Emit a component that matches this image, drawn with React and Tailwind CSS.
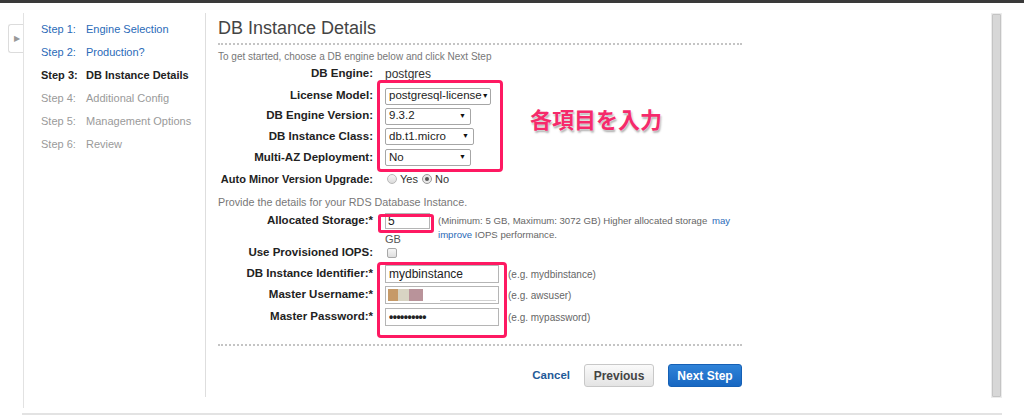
import React from 'react';

const steps = [
  { n: 'Step 1:', label: 'Engine Selection', state: 'done' },
  { n: 'Step 2:', label: 'Production?', state: 'done' },
  { n: 'Step 3:', label: 'DB Instance Details', state: 'current' },
  { n: 'Step 4:', label: 'Additional Config', state: 'todo' },
  { n: 'Step 5:', label: 'Management Options', state: 'todo' },
  { n: 'Step 6:', label: 'Review', state: 'todo' },
];

const sans = "font-['Liberation_Sans',Arial,sans-serif]";

function Label({ children, h = 'h-[20px]', size = 'text-[11.5px]' }) {
  return (
    <div className={`w-[155px] shrink-0 whitespace-nowrap text-right ${size} font-bold text-[#222] ${h} flex items-center justify-end`}>
      {children}
    </div>
  );
}

function Select({ value, width }) {
  return (
    <div className={`${width} h-[17px] border border-[#a6a6a6] rounded-[2px] bg-white flex items-center justify-between pl-[3px] pr-[4px] text-[11.5px] text-[#222] whitespace-nowrap`}>
      <span>{value}</span>
      <span className="text-[7px] text-[#111]">▼</span>
    </div>
  );
}

function Row({ label, children, className = '', h = 'h-[20px]', size }) {
  return (
    <div className={`flex items-center ${h} ${className}`}>
      <Label h={h} size={size}>{label}</Label>
      <div className="ml-[12px] flex items-center">{children}</div>
    </div>
  );
}

function TextBox({ children }) {
  return (
    <div className="w-[114px] h-[18px] border border-[#b5b5b5] bg-white flex items-center px-[3px] text-[12px] text-[#222]">
      {children}
    </div>
  );
}

export default function App() {
  return (
    <div className={`relative w-[1024px] h-[417px] bg-white overflow-hidden ${sans}`}>
      <div className="h-[3px] bg-[#3a3a3a]" />

      <div className="flex pt-[10px]">
        {/* collapse tab */}
        <div className="w-[23px] shrink-0">
          <div className="ml-[8px] mt-[11px] w-[16px] h-[29px] border border-r-0 border-[#dcdcdc] rounded-l-[3px] bg-white flex items-center justify-center">
            <span className="text-[8px] text-[#999]">▶</span>
          </div>
        </div>

        {/* wizard steps */}
        <div className="w-[182px] shrink-0 h-[395px] border-l border-[#e2e2e2] pl-[17px] pt-[5px]">
          {steps.map((s) => (
            <div
              key={s.n}
              className={`flex h-[23px] items-center text-[11px] whitespace-nowrap ${
                s.state === 'done'
                  ? 'text-[#2a6ab8]'
                  : s.state === 'current'
                  ? 'text-[#222] font-bold'
                  : 'text-[#9a9a9a]'
              }`}
            >
              <span className="w-[45px]">{s.n}</span>
              <span>{s.label}</span>
            </div>
          ))}
        </div>

        {/* main panel */}
        <div className="w-[786px] shrink-0 h-[384px] border-l border-[#dedede] pl-[12px]">
          <div className="w-[524px]">
            <h1 className="h-[30px] leading-[30px] text-[18px] text-[#444]">DB Instance Details</h1>
            <div className="h-[2px] border-b-2 border-dotted border-[#c4c4c4]" />

            <p className="mt-[5px] leading-[13px] text-[10px] text-[#777]">
              To get started, choose a DB engine below and click Next Step
            </p>

            <Row label="DB Engine:" className="mt-[1px]">
              <span className="text-[12px] text-[#333]">postgres</span>
            </Row>
            <Row label="License Model:" className="mt-[2px]">
              <Select value="postgresql-license" width="w-[106px]" />
            </Row>
            <Row label="DB Engine Version:">
              <Select value="9.3.2" width="w-[86px]" />
            </Row>
            <Row label="DB Instance Class:" h="h-[21px]">
              <Select value="db.t1.micro" width="w-[89px]" />
            </Row>
            <Row label="Multi-AZ Deployment:" h="h-[21px]">
              <Select value="No" width="w-[86px]" />
            </Row>
            <Row label="Auto Minor Version Upgrade:" h="h-[22px]" size="text-[11px]">
              <div className="flex items-center text-[11px] text-[#333] ml-[2px]">
                <span className="w-[10px] h-[10px] rounded-full border border-[#b8b8b8] bg-gradient-to-b from-[#f4f4f4] to-[#dcdcdc]" />
                <span className="ml-[3px]">Yes</span>
                <span className="ml-[4px] w-[10px] h-[10px] rounded-full border border-[#9a9a9a] bg-[#e8e8e8] flex items-center justify-center">
                  <span className="w-[4px] h-[4px] rounded-full bg-[#555]" />
                </span>
                <span className="ml-[3px]">No</span>
              </div>
            </Row>

            <p className="mt-[5px] leading-[14px] text-[10.75px] text-[#777]">
              Provide the details for your RDS Database Instance.
            </p>

            {/* allocated storage */}
            <div className="mt-[4px] flex h-[33px]">
              <Label h="h-[16px]">Allocated Storage:*</Label>
              <div className="ml-[12px] w-[53px] shrink-0">
                <div className="w-[45px] h-[16px] border border-[#b5b5b5] bg-white px-[2px] text-[12px] leading-[14px] text-[#222]">5</div>
                <div className="mt-[4px] leading-[13px] text-[11px] text-[#555]">GB</div>
              </div>
              <p className="mt-[1px] w-[320px] shrink-0 whitespace-nowrap leading-[14px] text-[9.6px] text-[#666]">
                (Minimum: 5 GB, Maximum: 3072 GB) Higher allocated storage{' '}
                <span className="text-[#2a6ab8] ml-[2px]">may</span>
                <br />
                <span className="text-[#2a6ab8]">improve</span> IOPS performance.
              </p>
            </div>

            <Row label="Use Provisioned IOPS:" h="h-[14px]">
              <span className="ml-[2px] w-[10px] h-[10px] rounded-[2px] border border-[#a8a8a8] bg-gradient-to-b from-[#f6f6f6] to-[#dedede]" />
            </Row>

            <Row label="DB Instance Identifier:*" h="h-[18px]" className="mt-[5px]">
              <TextBox>mydbinstance</TextBox>
              <span className="ml-[9px] text-[10px] text-[#666]">(e.g. mydbinstance)</span>
            </Row>
            <Row label="Master Username:*" h="h-[18px]" className="mt-[3px]">
              <div className="w-[114px] h-[18px] border border-[#b5b5b5] bg-white flex items-center pl-[2px]">
                <span className="w-[10px] h-[12px] bg-[#c69a68]" />
                <span className="w-[11px] h-[12px] bg-[#d8d4c3]" />
                <span className="w-[14px] h-[12px] bg-[#b9939a]" />
                <span className="ml-[17px] mt-[10px] w-[56px] h-px bg-[#d0d0d0]" />
              </div>
              <span className="ml-[9px] text-[10px] text-[#666]">(e.g. awsuser)</span>
            </Row>
            <Row label="Master Password:*" h="h-[18px]" className="mt-[4px]">
              <TextBox>
                <span className="text-[12px] tracking-[-0.5px] font-bold leading-none">••••••••••</span>
              </TextBox>
              <span className="ml-[9px] text-[10px] text-[#666]">(e.g. mypassword)</span>
            </Row>

            <div className="mt-[18px] h-[2px] border-b-2 border-dotted border-[#c4c4c4]" />

            <div className="mt-[18px] flex justify-end items-center">
              <span className="text-[11.5px] font-bold text-[#1f5a98] mr-[14px]">Cancel</span>
              <button className="w-[70px] h-[23px] rounded-[3px] border border-[#c8c8c8] bg-gradient-to-b from-[#fafafa] to-[#e4e4e4] text-[12px] font-bold text-[#444]">
                Previous
              </button>
              <button className="ml-[14px] w-[74px] h-[23px] rounded-[3px] border border-[#1560b5] bg-gradient-to-b from-[#2f83d8] to-[#1767c2] text-[12px] font-bold text-white">
                Next Step
              </button>
            </div>
          </div>
        </div>

        {/* scrollbar */}
        <div className="w-[11px] shrink-0 h-[385px] bg-[#ececec] p-[1px]">
          <div className="w-full h-full bg-[#d7d7d7] border border-[#c4c4c4] rounded-[1px]" />
        </div>
      </div>

      <div className="absolute left-[22px] top-[413px] w-[980px] h-[2px] bg-[#e3e3e3]" />

      {/* annotation frames */}
      <div className="absolute left-[377px] top-[80px] w-[126px] h-[92px] border-[3px] border-[#fe1962] rounded-[4px]" />
      <div className="absolute left-[378px] top-[214px] w-[56px] h-[19px] border-[3px] border-[#fe1962] rounded-[3px]" />
      <div className="absolute left-[377px] top-[262px] w-[130px] h-[76px] border-[3px] border-[#fe1962] rounded-[4px]" />
      <div className="absolute left-[530px] top-[102px] text-[22px] font-bold text-[#f52a6b] font-['Noto_Sans_CJK_JP',sans-serif] [text-shadow:0_0_2px_#fff,1px_2px_2px_rgba(0,0,0,0.35)]">
        各項目を入力
      </div>
    </div>
  );
}
